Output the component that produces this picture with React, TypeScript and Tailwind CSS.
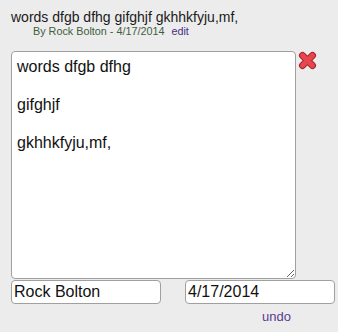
import React from "react";

const noteText = "words dfgb dfhg\n\ngifghjf\n\ngkhhkfyju,mf,";

const DeleteIcon: React.FC = () => (
  <svg width="19" height="19" viewBox="0 0 19 19" aria-hidden="true">
    <g strokeLinecap="round">
      <path d="M4.5 4.5 L14.5 14.5 M14.5 4.5 L4.5 14.5" stroke="#a8242c" strokeWidth="7" />
      <path d="M4.5 4.5 L14.5 14.5 M14.5 4.5 L4.5 14.5" stroke="#e8464e" strokeWidth="5" />
    </g>
  </svg>
);

export default function App() {
  return (
    <div className="w-[338px] h-[332px] bg-[#ececec] font-['Liberation_Sans',Arial,sans-serif] text-[#1a1a1a]">
      {/* Heading + byline */}
      <div className="pl-[11px] pt-[10px] text-[14px] leading-[15px]">
        words dfgb dfhg gifghjf gkhhkfyju,mf,
      </div>
      <div className="pl-[33px] text-[10.8px] leading-[12px] text-[#3e5e3e]">
        By Rock Bolton - 4/17/2014
        <span className="ml-[7px] text-[#4b2f80]">edit</span>
      </div>

      {/* Editor */}
      <div className="flex items-start pl-[11px] pt-[14px]">
        <textarea
          defaultValue={noteText}
          className="w-[285px] h-[228px] rounded-[4px] border border-[#a0a0a0] bg-white px-[5px] py-[5px] text-[16px] leading-[19px] text-[#111] outline-none resize"
        />
        <button type="button" className="ml-[2px] mt-[0px]" aria-label="delete">
          <DeleteIcon />
        </button>
      </div>

      <div className="flex pl-[11px] pt-[1px] gap-[24px]">
        <input
          defaultValue="Rock Bolton"
          className="w-[150px] h-[24px] rounded-[4px] border border-[#a0a0a0] bg-white px-[2px] text-[16px] text-[#111] outline-none"
        />
        <input
          defaultValue="4/17/2014"
          className="w-[150px] h-[24px] rounded-[4px] border border-[#a0a0a0] bg-white px-[2px] text-[16px] text-[#111] outline-none"
        />
      </div>

      <div className="pl-[262px] pt-[5px] text-[13px] leading-[15px] text-[#5a3d8f]">
        undo
      </div>
    </div>
  );
}
